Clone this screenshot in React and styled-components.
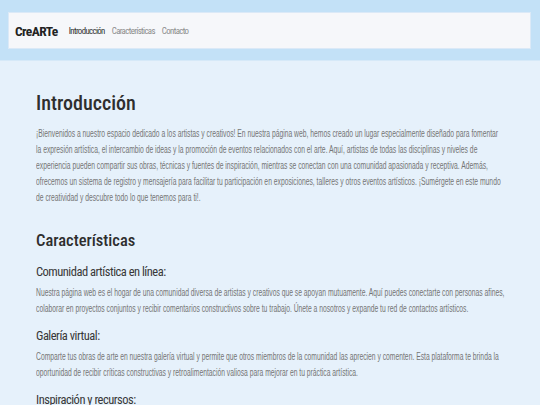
import React from "react";
import styled, { createGlobalStyle } from "styled-components";

const GlobalStyle = createGlobalStyle`
  html, body { margin: 0; padding: 0; }
  body {
    background: #e6f1fb;
    font-family: Roboto, "Liberation Sans", Arial, sans-serif;
    font-stretch: 75%;
    color: #333;
  }
`;

const Header = styled.header`
  background: #c3e1f7;
  padding: 12px 9px 11px 8px;
  border-bottom: 1px solid #d6e9f8;
`;

const Navbar = styled.nav`
  display: flex;
  align-items: center;
  gap: 11px;
  height: 35px;
  padding: 0 6px;
  background: #f6f7fa;
  border: 1px solid #dbe9f7;
`;

const Brand = styled.span`
  font-size: 13.5px;
  font-weight: 700;
  color: #222;
  letter-spacing: -0.6px;
`;

const NavLinks = styled.div`
  display: flex;
  gap: 7px;
`;

const NavLink = styled.a`
  font-size: 8.8px;
  letter-spacing: -0.62px;
  color: ${(p) => (p.$active ? "#2f2f2f" : "#8a8a8a")};
  text-decoration: none;
`;

const Main = styled.main`
  padding: 30px 35px 40px 36px;
  overflow-x: hidden;
`;

const H1 = styled.h1`
  margin: 0 0 11px;
  font-size: 20px;
  line-height: 24px;
  font-weight: 500;
  color: #2e2e2e;
`;

const H2 = styled.h2`
  margin: 25px 0 13px;
  font-size: 16.5px;
  line-height: 20px;
  font-weight: 500;
  color: #2e2e2e;
`;

const H3 = styled.h3`
  margin: ${(p) => (p.$first ? "1px" : "11px")} 0 5px;
  font-size: 12.5px;
  line-height: 16px;
  font-weight: 400;
  letter-spacing: -0.5px;
  color: #383838;
`;

/* Body copy is a horizontally condensed Arial-metric face */
const P = styled.p`
  --squeeze: 0.6758;
  margin: 0;
  width: calc(100% / var(--squeeze));
  transform: scaleX(var(--squeeze));
  transform-origin: 0 0;
  font-family: "Liberation Sans", Arial, sans-serif;
  font-stretch: normal;
  font-size: 10px;
  line-height: 16px;
  color: #757575;
`;

export default function App() {
  return (
    <>
      <GlobalStyle />
      <Header>
        <Navbar>
          <Brand>CreARTe</Brand>
          <NavLinks>
            <NavLink href="#intro" $active>Introducción</NavLink>
            <NavLink href="#caracteristicas">Características</NavLink>
            <NavLink href="#contacto">Contacto</NavLink>
          </NavLinks>
        </Navbar>
      </Header>
      <Main>
        <section id="intro">
          <H1>Introducción</H1>
          <P>
            ¡Bienvenidos a nuestro espacio dedicado a los artistas y creativos! En nuestra página web, hemos creado un lugar especialmente diseñado para fomentar la expresión artística, el intercambio de ideas y la promoción de eventos relacionados con el arte. Aquí, artistas de todas las disciplinas y niveles de experiencia pueden compartir sus obras, técnicas y fuentes de inspiración, mientras se conectan con una comunidad apasionada y receptiva. Además, ofrecemos un sistema de registro y mensajería para facilitar tu participación en exposiciones, talleres y otros eventos artísticos. ¡Sumérgete en este mundo de creatividad y descubre todo lo que tenemos para ti!.
          </P>
        </section>
        <section id="caracteristicas">
          <H2>Características</H2>
          <H3 $first>Comunidad artística en línea:</H3>
          <P>
            Nuestra página web es el hogar de una comunidad diversa de artistas y creativos que se apoyan mutuamente. Aquí puedes conectarte con personas afines, colaborar en proyectos conjuntos y recibir comentarios constructivos sobre tu trabajo. Únete a nosotros y expande tu red de contactos artísticos.
          </P>
          <H3>Galería virtual:</H3>
          <P>
            Comparte tus obras de arte en nuestra galería virtual y permite que otros miembros de la comunidad las aprecien y comenten. Esta plataforma te brinda la oportunidad de recibir críticas constructivas y retroalimentación valiosa para mejorar en tu práctica artística.
          </P>
          <H3>Inspiración y recursos:</H3>
          <P>
            Descubre una amplia variedad de recursos, tutoriales y artículos que te ayudarán a desarrollar tus habilidades y encontrar inspiración para tus próximos proyectos.
          </P>
        </section>
      </Main>
    </>
  );
}
